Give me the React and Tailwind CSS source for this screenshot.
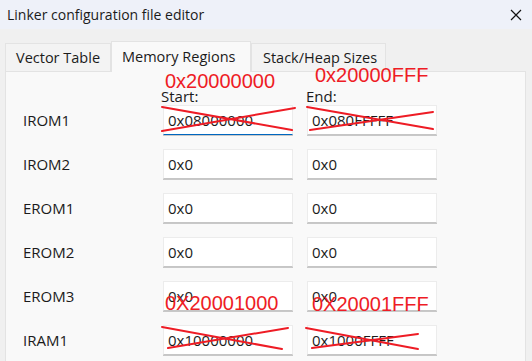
import React from "react"

const rows = [
  { name: "IROM1", start: "0x08000000", end: "0x080FFFFF", focus: true },
  { name: "IROM2", start: "0x0", end: "0x0" },
  { name: "EROM1", start: "0x0", end: "0x0" },
  { name: "EROM2", start: "0x0", end: "0x0" },
  { name: "EROM3", start: "0x0", end: "0x0" },
  { name: "IRAM1", start: "0x10000000", end: "0x1000FFFF" },
]

const ui = { fontFamily: '"Open Sans", "Noto Sans", sans-serif' }

function Field({ value, focus }) {
  return (
    <div
      className={
        "w-[130px] h-[30px] bg-white flex items-center pl-[4px] text-[15px] text-[#1b1b1b] border border-[#ececec] shadow-[0_1px_0_#c8c8c8] " +
        (focus ? "border-b-[#0067c0]" : "border-b-[#c6c6c6]")
      }
    >
      {value}
    </div>
  )
}

export default function App() {
  return (
    <div className="relative w-[532px] h-[361px] overflow-hidden bg-[#f0f0f0]" style={ui}>
      {/* title bar */}
      <div className="h-[29px] bg-[#eef1f9] flex items-center justify-between pl-[7px] pr-[10px]">
        <span className="text-[14px] text-[#1b1b1b]">Linker configuration file editor</span>
        <svg width="12" height="12" viewBox="0 0 12 12">
          <path d="M1 1 L11 11 M11 1 L1 11" stroke="#111" strokeWidth="1.2" />
        </svg>
      </div>

      {/* tabs */}
      <div className="flex items-end pl-[5px] pt-[12px] h-[42px]">
        <div className="h-[28px] w-[106px] flex items-center pl-[10px] text-[14.5px] text-[#1b1b1b] bg-[#f3f3f3] border border-[#e3e3e3] border-b-0">
          Vector Table
        </div>
        <div className="h-[31px] w-[140px] flex items-center pl-[10px] text-[14.5px] text-[#1b1b1b] bg-[#f9f9f9] border border-[#e3e3e3] border-b-0 relative top-[1px] z-10">
          Memory Regions
        </div>
        <div className="h-[28px] w-[135px] flex items-center pl-[11px] text-[14.5px] text-[#1b1b1b] bg-[#f3f3f3] border border-[#e3e3e3] border-b-0">
          Stack/Heap Sizes
        </div>
      </div>

      {/* panel */}
      <div className="mx-[5px] w-[521px] h-[300px] bg-[#f9f9f9] border border-[#e3e3e3]">
        <div className="flex items-end h-[33px] pl-[155px] text-[15px] leading-[18px] text-[#1b1b1b]">
          <span className="w-[145px]">Start:</span>
          <span>End:</span>
        </div>
        <div className="flex flex-col gap-[14px]">
          {rows.map(r => (
            <div key={r.name} className="flex items-center h-[30px] pl-[17px]">
              <span className="w-[140px] text-[15px] text-[#1b1b1b]">{r.name}</span>
              <Field value={r.start} focus={r.focus} />
              <div className="w-[14px]" />
              <Field value={r.end} />
            </div>
          ))}
        </div>
      </div>

      {/* red annotations */}
      <svg className="absolute inset-0 pointer-events-none" width="532" height="361" viewBox="0 0 532 361">
        <g stroke="#ee1c25" strokeWidth="2" strokeLinecap="round">
          <line x1="162" y1="107" x2="292" y2="130" />
          <line x1="162" y1="131" x2="295" y2="108" />
          <line x1="307" y1="107" x2="433" y2="129" />
          <line x1="310" y1="130" x2="433" y2="112" />
          <line x1="162" y1="327" x2="282" y2="349" />
          <line x1="168" y1="348" x2="288" y2="328" />
          <line x1="306" y1="328" x2="418" y2="349" />
          <line x1="312" y1="348" x2="418" y2="334" />
        </g>
        <g fill="#ee1c25" fontFamily='"Liberation Sans", Arial, sans-serif' fontSize="20">
          <text x="165" y="88">0x20000000</text>
          <text x="315" y="82">0x20000FFF</text>
          <text x="165" y="310">0X20001000</text>
          <text x="312" y="311">0X20001FFF</text>
        </g>
      </svg>
    </div>
  )
}
